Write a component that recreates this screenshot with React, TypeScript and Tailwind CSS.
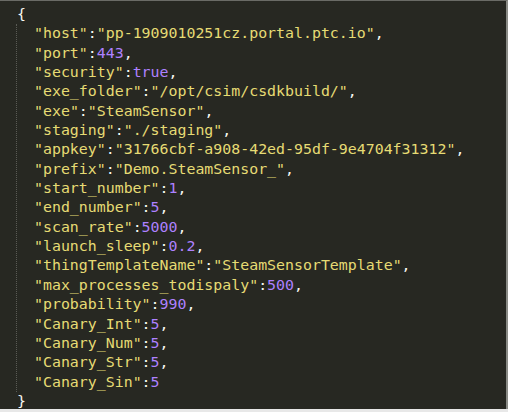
const S = 'text-[#e6db74]';
const N = 'text-[#ae81ff]';
const P = 'text-[#f8f8f2]';

type Entry = { key: string; value: string; kind: 'str' | 'num' };

const entries: Entry[] = [
  { key: 'host', value: 'pp-1909010251cz.portal.ptc.io', kind: 'str' },
  { key: 'port', value: '443', kind: 'num' },
  { key: 'security', value: 'true', kind: 'num' },
  { key: 'exe_folder', value: '/opt/csim/csdkbuild/', kind: 'str' },
  { key: 'exe', value: 'SteamSensor', kind: 'str' },
  { key: 'staging', value: './staging', kind: 'str' },
  { key: 'appkey', value: '31766cbf-a908-42ed-95df-9e4704f31312', kind: 'str' },
  { key: 'prefix', value: 'Demo.SteamSensor_', kind: 'str' },
  { key: 'start_number', value: '1', kind: 'num' },
  { key: 'end_number', value: '5', kind: 'num' },
  { key: 'scan_rate', value: '5000', kind: 'num' },
  { key: 'launch_sleep', value: '0.2', kind: 'num' },
  { key: 'thingTemplateName', value: 'SteamSensorTemplate', kind: 'str' },
  { key: 'max_processes_todispaly', value: '500', kind: 'num' },
  { key: 'probability', value: '990', kind: 'num' },
  { key: 'Canary_Int', value: '5', kind: 'num' },
  { key: 'Canary_Num', value: '5', kind: 'num' },
  { key: 'Canary_Str', value: '5', kind: 'num' },
  { key: 'Canary_Sin', value: '5', kind: 'num' },
];

export default function App() {
  return (
    <div className="w-[508px] h-[412px] bg-[#e8e8e8] flex flex-col overflow-hidden">
      <div className="h-[409px] bg-[#272822] border-t border-[#6a6b66] border-r-2 border-r-[#8a8b86] flex flex-col pl-[16px] pt-[4px] font-['DejaVu_Sans_Mono','Liberation_Mono',monospace] text-[14.9px] leading-[19.35px] whitespace-pre">
        <div className={`${P} ml-px`}>{'{'}</div>
        <div className="border-l border-dotted border-[#5a5b55] pl-[17px] flex flex-col">
          {entries.map((e, i) => (
            <div key={e.key}>
              <span className={S}>"{e.key}"</span>
              <span className={P}>:</span>
              {e.kind === 'str' ? (
                <span className={S}>"{e.value}"</span>
              ) : (
                <span className={N}>{e.value}</span>
              )}
              {i < entries.length - 1 && <span className={P}>,</span>}
            </div>
          ))}
        </div>
        <div className={`${P} ml-px`}>{'}'}</div>
      </div>
    </div>
  );
}
